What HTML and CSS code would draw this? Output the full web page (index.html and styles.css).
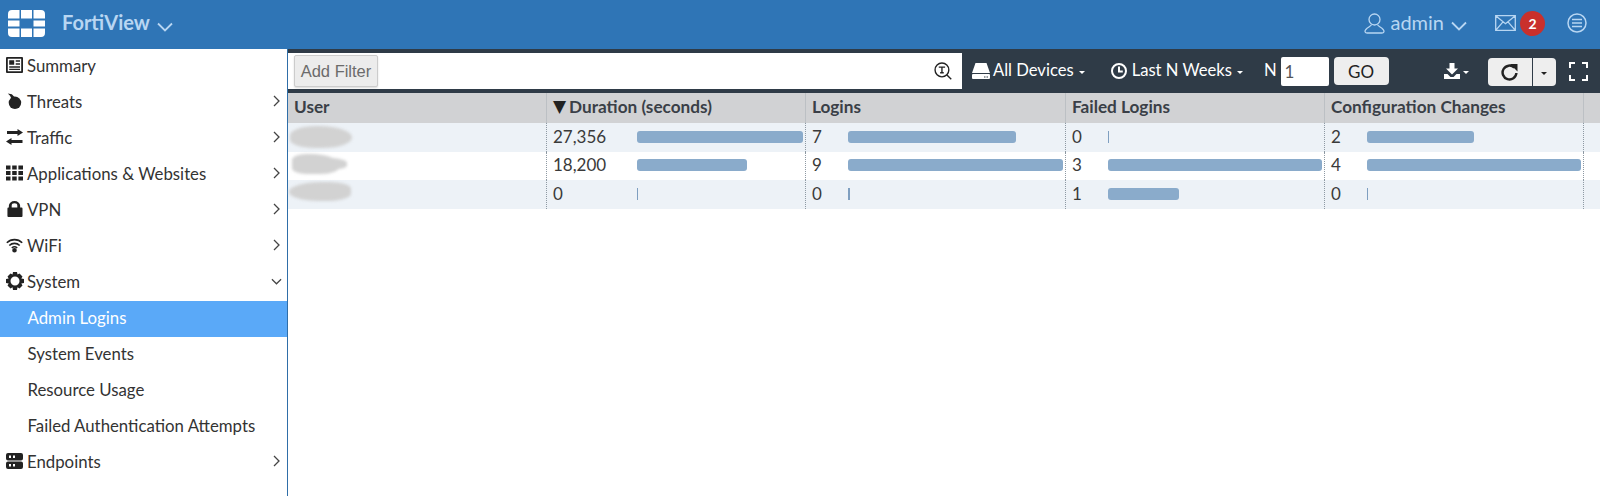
FILE: index.html
```html
<!DOCTYPE html>
<html lang="en">
<head>
<meta charset="utf-8">
<title>FortiView</title>
<link rel="stylesheet" href="styles.css">
</head>
<body>
<header class="topbar">
  <svg class="logo" viewBox="0 0 37 27"><path d="M4 0h7.500v8.500H0V4a4 4 0 0 1 4-4zM13 0h11v8.500H13zM25.500 0H33a4 4 0 0 1 4 4v4.500H25.500zM0 10.500h11.500v6H0zM25.500 10.500H37v6H25.500zM0 18.500h11.500V27H4a4 4 0 0 1-4-4zM13 18.500h11V27H13zM25.500 18.500H37V23a4 4 0 0 1-4 4h-7.500z"/></svg>
  <span class="brand">FortiView</span>
  <svg class="chev" viewBox="0 0 16 10"><path d="M1 1.500l7 7 7-7"/></svg>
  <div class="top-right">
    <svg class="user-ic" viewBox="0 0 21 21"><circle cx="10.500" cy="6.500" r="5.500"/><path d="M7.500 11.500c0 2-6.500 3.500-6.500 7 0 1 1 1.500 2 1.500h15c1 0 2-.5 2-1.500 0-3.500-6.500-5-6.500-7"/></svg>
    <span class="admin">admin</span>
    <svg class="chev chev-admin" viewBox="0 0 16 10"><path d="M1 1.500l7 7 7-7"/></svg>
    <svg class="mail-ic" viewBox="0 0 21 16"><path d="M.7.7h19.600v14.600H.7zM.7.700l9.800 8 9.800-8M.7 15.300l7.300-8.500M20.300 15.300l-7.300-8.500"/></svg>
    <span class="badge">2</span>
    <svg class="menu-ic" viewBox="0 0 20 20"><circle cx="10" cy="10" r="9"/><path d="M5 6.500h10M5 10h10M5 13.500h10"/></svg>
  </div>
</header>
<div class="layout">
  <nav class="sidebar">
    <a class="nav-item"><svg class="nav-ic" viewBox="0 0 17 16"><path fill-rule="evenodd" d="M1 0h15a1 1 0 0 1 1 1v14a1 1 0 0 1-1 1H1a1 1 0 0 1-1-1V1a1 1 0 0 1 1-1zm.8 1.800v12.400h13.400V1.800zM3.200 3.200h5v4.600h-5zM9.700 3.200H14v1.500H9.700zM9.700 6.300H14v1.500H9.700zM3.200 9.300H14v1.500H3.200zM3.200 11.800H14v1.300H3.200z"/></svg><span>Summary</span></a>
    <a class="nav-item"><svg class="nav-ic" viewBox="0 0 17 18"><circle cx="9" cy="11" r="7"/><path d="M1 0.500L5.500 1.500 8.500 4.500 5 6.500 3.500 3z"/></svg><span>Threats</span><svg class="arrow" viewBox="0 0 7 12"><path d="M1 1l5 5-5 5"/></svg></a>
    <a class="nav-item"><svg class="nav-ic" viewBox="0 0 17 16"><path d="M11.500 0L17 3.500 11.500 7V5H1V2h10.500zM5.500 9v2H16.500v3H5.500v2L0 12.500z"/></svg><span>Traffic</span><svg class="arrow" viewBox="0 0 7 12"><path d="M1 1l5 5-5 5"/></svg></a>
    <a class="nav-item"><svg class="nav-ic" viewBox="0 0 17 15"><path d="M0 0h4.500v4H0zM6.200 0h4.500v4H6.200zM12.400 0H17v4h-4.600zM0 5.500h4.500v4H0zM6.200 5.500h4.500v4H6.200zM12.400 5.500H17v4h-4.600zM0 11h4.500v4H0zM6.200 11h4.500v4H6.200zM12.400 11H17v4h-4.600z"/></svg><span>Applications &amp; Websites</span><svg class="arrow" viewBox="0 0 7 12"><path d="M1 1l5 5-5 5"/></svg></a>
    <a class="nav-item"><svg class="nav-ic" viewBox="0 0 17 17"><path fill-rule="evenodd" d="M2.500 7V5a6 5 0 0 1 12 0v2H16a1 1 0 0 1 1 1v8a1 1 0 0 1-1 1H2a1 1 0 0 1-1-1V8a1 1 0 0 1 1-1zm3 0h6V5a3 2.500 0 0 0-6 0z"/></svg><span>VPN</span><svg class="arrow" viewBox="0 0 7 12"><path d="M1 1l5 5-5 5"/></svg></a>
    <a class="nav-item"><svg class="nav-ic wifi" viewBox="0 0 17 14"><path d="M.8 4.800a11 11 0 0 1 15.400 0M3.300 7.500a7.500 7.500 0 0 1 10.400 0M5.800 10a4 4 0 0 1 5.400 0"/><circle cx="8.500" cy="12.300" r="1.500"/></svg><span>WiFi</span><svg class="arrow" viewBox="0 0 7 12"><path d="M1 1l5 5-5 5"/></svg></a>
    <a class="nav-item"><svg class="nav-ic gear" viewBox="0 0 18 18"><path fill-rule="evenodd" d="M7 0h4l.5 2.500 2-1 3 3-1.200 2 2.700.5v4l-2.700.5 1.200 2-3 3-2-1.200L11 18H7l-.5-2.700-2 1.200-3-3 1.200-2L0 11V7l2.700-.5-1.200-2 3-3 2 1Zm2 4.500a4.500 4.500 0 1 0 0 9 4.500 4.500 0 0 0 0-9z"/></svg><span>System</span><svg class="arrow arrow-down" viewBox="0 0 12 7"><path d="M1 1l5 5 5-5"/></svg></a>
    <a class="nav-item sub active"><span>Admin Logins</span></a>
    <a class="nav-item sub"><span>System Events</span></a>
    <a class="nav-item sub"><span>Resource Usage</span></a>
    <a class="nav-item sub"><span>Failed Authentication Attempts</span></a>
    <a class="nav-item"><svg class="nav-ic" viewBox="0 0 17 16"><path fill-rule="evenodd" d="M2 0h13a2 2 0 0 1 2 2v3.500a2 2 0 0 1-2 2H2a2 2 0 0 1-2-2V2a2 2 0 0 1 2-2zm1 2.500v2.500h2V2.500zm4 0v2.500h2V2.500zM2 8.500h13a2 2 0 0 1 2 2V14a2 2 0 0 1-2 2H2a2 2 0 0 1-2-2v-3.500a2 2 0 0 1 2-2zm1 2.500v2.500h2V11zm4 0v2.500h2V11z"/></svg><span>Endpoints</span><svg class="arrow" viewBox="0 0 7 12"><path d="M1 1l5 5-5 5"/></svg></a>
  </nav>
  <main class="content">
    <div class="toolbar">
      <div class="filter">
        <button class="add-filter">Add Filter</button>
        <svg class="search-ic" viewBox="0 0 17 17"><circle cx="7.500" cy="7.500" r="6.500"/><path d="M4.500 4.800h6M7.500 4.800v5.400M5.800 10.200h3.400M12 12l4.300 4.300"/></svg>
      </div>
      <svg class="drive-ic" viewBox="0 0 18 16"><path d="M3.500 0h11L18 10H0z"/><path fill-rule="evenodd" d="M1 11h16a1 1 0 0 1 1 1v3a1 1 0 0 1-1 1H1a1 1 0 0 1-1-1v-3a1 1 0 0 1 1-1zm11 2.500v1h1.500v-1zm2.500 0v1H16v-1z"/></svg>
      <span class="tool-text devices">All Devices</span><i class="caret"></i>
      <svg class="clock-ic" viewBox="0 0 16 16"><circle cx="8" cy="8" r="7"/><path d="M8 3.500V8.500h3.800"/></svg>
      <span class="tool-text">Last N Weeks</span><i class="caret"></i>
      <span class="tool-text n-label">N</span>
      <input class="n-input" value="1">
      <button class="go">GO</button>
      <svg class="dl-ic" viewBox="0 0 16 16"><path d="M5.500 0h5v5.500H14L8 11.500 2 5.500h3.500zM0 11h3.500L6.500 14h3l3-3H16v5H0z"/></svg><i class="caret"></i>
      <div class="split">
        <button class="refresh"><svg class="refresh-ic" viewBox="0 0 16 16"><path d="M12.500 3.300A6.500 6.500 0 1 0 14.500 8.500"/><path class="fill" d="M8.500 0L15.500 0V7z"/></svg></button>
        <button class="refresh-more"><i class="caret dark"></i></button>
      </div>
      <svg class="full-ic" viewBox="0 0 19 19"><path d="M1 6V1h5M13 1h5v5M18 13v5h-5M6 18H1v-5"/></svg>
    </div>
    <div class="table">
      <div class="th">User</div>
      <div class="th"><span class="sort">▼</span>Duration (seconds)</div>
      <div class="th">Logins</div>
      <div class="th">Failed Logins</div>
      <div class="th">Configuration Changes</div>
      <div class="th th-end"></div>

      <div class="td odd user-cell"><i class="smudge s1"></i></div>
      <div class="td odd dur"><span>27,356</span><i class="bar" style="width:100%"></i></div>
      <div class="td odd"><span>7</span><i class="bar" style="width:78%"></i></div>
      <div class="td odd"><span>0</span><i class="bar zero"></i></div>
      <div class="td odd"><span>2</span><i class="bar" style="width:50%"></i></div>
      <div class="td odd td-end"></div>

      <div class="td user-cell"><i class="smudge s2"></i></div>
      <div class="td dur"><span>18,200</span><i class="bar" style="width:66.500%"></i></div>
      <div class="td"><span>9</span><i class="bar" style="width:100%"></i></div>
      <div class="td"><span>3</span><i class="bar" style="width:100%"></i></div>
      <div class="td"><span>4</span><i class="bar" style="width:100%"></i></div>
      <div class="td td-end"></div>

      <div class="td odd user-cell"><i class="smudge s3"></i></div>
      <div class="td odd dur"><span>0</span><i class="bar zero"></i></div>
      <div class="td odd"><span>0</span><i class="bar zero wide"></i></div>
      <div class="td odd"><span>1</span><i class="bar" style="width:33%"></i></div>
      <div class="td odd"><span>0</span><i class="bar zero"></i></div>
      <div class="td odd td-end"></div>
    </div>
  </main>
</div>
</body>
</html>
```
FILE: styles.css
```css
* { box-sizing: border-box; }
html, body { height: 100%; }
body {
  margin: 0;
  background: #fff;
  font-family: Lato, "Open Sans", sans-serif;
  font-size: 17px;
  color: #333;
  overflow: hidden;
}
button, input { font-family: inherit; }

.topbar {
  height: 49px;
  background: #2f75b6;
  display: flex;
  align-items: center;
  padding-left: 8px;
  color: #b8d6f2;
}
.logo { width: 37px; height: 27px; fill: #fff; margin-top: -3px; }
.brand { font-size: 20px; font-weight: 700; margin-left: 17px; margin-top: -5px; }
.chev { width: 16px; height: 10px; fill: none; stroke: #b8d6f2; stroke-width: 1.800; margin-left: 7px; margin-top: 5px; }
.top-right { margin-left: auto; display: flex; align-items: center; padding-right: 13px; margin-top: -3px; }
.user-ic { width: 21px; height: 21px; fill: none; stroke: #b8d6f2; stroke-width: 1.300; }
.admin { font-size: 20px; margin-left: 5px; margin-top: -2px; }
.chev-admin { margin-left: 7px; margin-top: 5px; }
.mail-ic { width: 21px; height: 16px; fill: none; stroke: #b8d6f2; stroke-width: 1.300; margin-left: 28px; }
.badge {
  width: 25px; height: 25px; border-radius: 50%;
  background: #c9302c; color: #fff;
  font-size: 14px; font-weight: 700;
  display: flex; align-items: center; justify-content: center;
  margin-left: 4px;
}
.menu-ic { width: 20px; height: 20px; fill: none; stroke: #b8d6f2; stroke-width: 1.500; margin-left: 22px; }

.layout { display: flex; height: 447px; }
.sidebar {
  width: 288px;
  flex: none;
  border-right: 1.500px solid #2f6ea8;
  color: #333;
  font-size: 16.800px;
}
.nav-item {
  height: 36px;
  display: flex;
  align-items: center;
  padding-left: 6px;
  padding-right: 7px;
  padding-bottom: 4px;
}
.nav-ic { width: 17px; height: 16px; fill: #222; flex: none; margin-right: 4px; }
.nav-ic.gear { width: 18px; height: 18px; margin-right: 3px; }
.nav-ic.wifi { fill: #222; stroke: #222; stroke-width: 1.600; }
.nav-ic.wifi path { fill: none; }
.arrow { width: 7px; height: 12px; margin-left: auto; fill: none; stroke: #444; stroke-width: 1.300; margin-top: -1px; }
.arrow-down { width: 11px; height: 7px; margin-right: -2px; margin-top: 0; }
.sub { padding-left: 27.500px; }
.active { background: #5aa9f8; color: #fff; }

.content { flex: 1; min-width: 0; }
.toolbar {
  height: 44px;
  background: #2f3b47;
  display: flex;
  align-items: center;
  color: #fff;
}
.filter {
  width: 674px;
  height: 36px;
  background: #fff;
  display: flex;
  align-items: center;
  justify-content: space-between;
  padding: 0 10px 0 6px;
}
.add-filter {
  width: 84px; height: 32px;
  border: 1px solid #ccc;
  border-radius: 2px;
  background: #ececec;
  box-shadow: 0 1px 2px rgba(0,0,0,.15);
  font-family: "Liberation Sans", Arial, sans-serif;
  font-size: 16.500px;
  color: #6b6b6b;
  padding: 0;
}
.search-ic { width: 18px; height: 18px; fill: none; stroke: #222; stroke-width: 1.300; }
.tool-text { font-size: 16.600px; white-space: nowrap; margin-top: -2px; }
.drive-ic { width: 18px; height: 16px; fill: #fff; margin-left: 10px; margin-right: 3px; }
.caret {
  display: block;
  width: 0; height: 0;
  border-left: 3.500px solid transparent;
  border-right: 3.500px solid transparent;
  border-top: 3.500px solid #fff;
  margin-left: 5px;
  margin-top: 3px;
}
.caret.dark { border-top-color: #222; margin: 2px 0 0; }
.clock-ic { width: 16px; height: 16px; fill: none; stroke: #fff; stroke-width: 2; margin-left: 26px; margin-right: 5px; }
.n-label { margin-left: 21px; }
.n-input {
  width: 48px; height: 29px;
  margin-left: 4px;
  border: 0;
  border-radius: 2px;
  background: #fff;
  font-size: 17px;
  color: #555;
  padding: 0 4px;
}
.go {
  width: 55px; height: 28px;
  margin-left: 5px;
  border: 0;
  border-radius: 4px;
  background: #eee;
  font-size: 17px;
  color: #222;
  padding: 0;
}
.dl-ic { width: 16px; height: 16px; fill: #fff; margin-left: 55px; }
.dl-ic + .caret { margin-left: 3px; }
.split { display: flex; margin-left: 19px; margin-top: 2px; height: 28px; }
.refresh, .refresh-more {
  border: 0; background: #eee; padding: 0;
  display: flex; align-items: center; justify-content: center;
}
.refresh { width: 44px; border-radius: 4px 0 0 4px; }
.refresh-more { width: 23px; border-radius: 0 4px 4px 0; margin-left: 1px; }
.refresh-ic { width: 17px; height: 17px; fill: none; stroke: #222; stroke-width: 2.300; }
.refresh-ic .fill { fill: #222; stroke: none; }
.full-ic { width: 19px; height: 19px; fill: none; stroke: #fff; stroke-width: 2; margin-left: 13px; }

.table {
  display: grid;
  grid-template-columns: 258px 259px 260px 259px 259px 1fr;
  grid-template-rows: 30px 29px 28px 29px;
}
.th {
  background: #d1d2d4;
  font-size: 17.200px;
  font-weight: 700;
  color: #3a3f47;
  padding: 0 7px 4px 6px;
  display: flex;
  align-items: center;
  border-left: 1px solid #bcc0c4;
  white-space: nowrap;
}
.th:first-child { border-left: 0; }
.sort { font-size: 17px; line-height: 1; margin-right: 3px; color: #222; font-family: "DejaVu Sans", sans-serif; }
.td {
  display: grid;
  grid-template-columns: 36px 1fr;
  align-items: center;
  padding: 0 2px 0 6px;
  border-left: 1px dotted #8e99a3;
  color: #3a3a3a;
}
.td > span { padding-bottom: 3px; }
.td.dur { grid-template-columns: 84px 1fr; }
.td.user-cell { display: block; border-left: 0; padding: 0; position: relative; }
.td.td-end { display: block; }
.odd { background: #edf2f7; }
.bar {
  display: block;
  height: 12px;
  background: #8aabcb;
  border-radius: 3px;
  margin-bottom: 2px;
}
.bar.zero { width: 1px; border-radius: 0; background: #7f9fc0; }
.bar.wide { width: 2px; }
.smudge {
  position: absolute;
  background: #d2d2d2;
  filter: blur(1.500px);
  border-radius: 45% 55% 50% 40%;
  left: 2px;
  top: 3px;
  width: 62px;
  height: 22px;
}
.s2 { width: 48px; left: 4px; top: 2px; height: 20px; border-radius: 30% 60% 40% 30%; }
.s2::after {
  content: "";
  position: absolute;
  left: 10px;
  top: 4px;
  width: 45px;
  height: 12px;
  background: #d2d2d2;
  border-radius: 40%;
}
.s3 { width: 62px; left: 1px; top: 2px; height: 19px; border-radius: 60% 40% 45% 55%; }
```
